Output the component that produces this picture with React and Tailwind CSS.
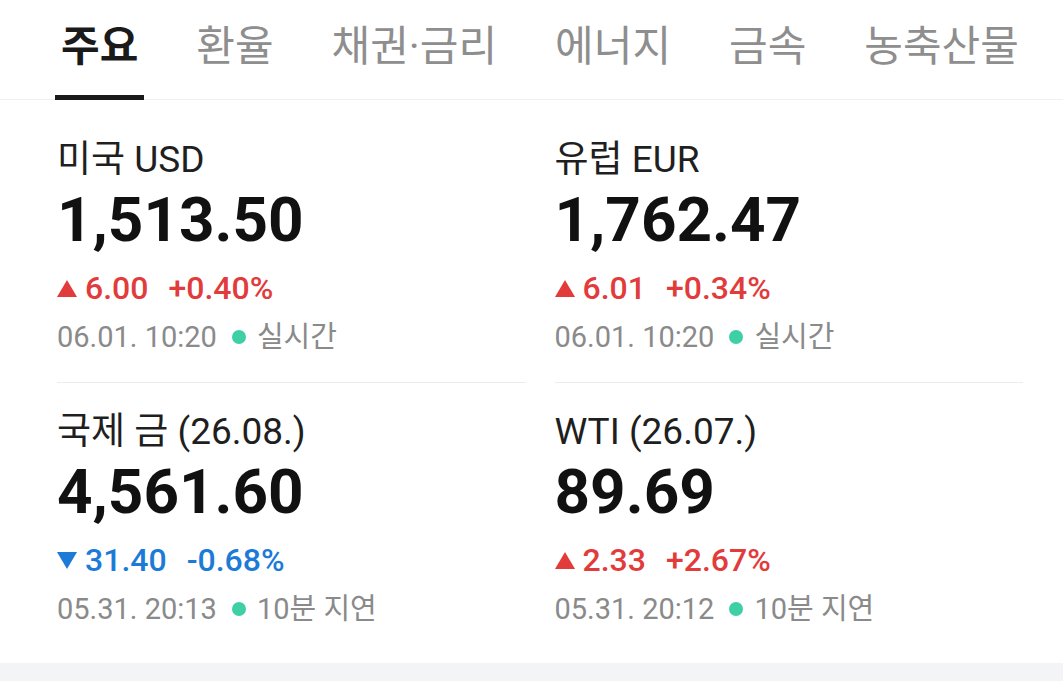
const TABS = ['주요', '환율', '채권·금리', '에너지', '금속', '농축산물'];

const ITEMS = [
  { name: '미국 USD', price: '1,513.50', dir: 'up', diff: '6.00', rate: '+0.40%', time: '06.01. 10:20', note: '실시간' },
  { name: '유럽 EUR', price: '1,762.47', dir: 'up', diff: '6.01', rate: '+0.34%', time: '06.01. 10:20', note: '실시간' },
  { name: '국제 금 (26.08.)', price: '4,561.60', dir: 'down', diff: '31.40', rate: '-0.68%', time: '05.31. 20:13', note: '10분 지연' },
  { name: 'WTI (26.07.)', price: '89.69', dir: 'up', diff: '2.33', rate: '+2.67%', time: '05.31. 20:12', note: '10분 지연' },
];

function Arrow({ dir }) {
  if (dir === 'up') {
    return (
      <svg width="20" height="17" viewBox="0 0 20 17" className="shrink-0">
        <polygon points="10,0 20,17 0,17" fill="#e23b3b" />
      </svg>
    );
  }
  return (
    <svg width="20" height="17" viewBox="0 0 20 17" className="shrink-0">
      <polygon points="0,0 20,0 10,17" fill="#1b7bd6" />
    </svg>
  );
}

function Quote({ item, first }) {
  const up = item.dir === 'up';
  return (
    <div className={first ? 'pt-[40px] pb-[27px] border-b border-[#ececec]' : 'pt-[29px] pb-[36px]'}>
      <div className="text-[37px] leading-[40px] text-[#1f1f1f]">{item.name}</div>
      <div className="mt-[5px] text-[62px] leading-[70px] font-bold text-[#111111]">{item.price}</div>
      <div className={`mt-[15px] flex items-center text-[32px] leading-[36px] font-medium ${up ? 'text-[#e23b3b]' : 'text-[#1b7bd6]'}`}>
        <Arrow dir={item.dir} />
        <span className="ml-[8px]">{item.diff}</span>
        <span className="ml-[20px]">{item.rate}</span>
      </div>
      <div className="mt-[13px] flex items-center text-[29px] leading-[36px] text-[#8a8a8a]">
        <span>{item.time}</span>
        <span className="ml-[15px] w-[14px] h-[14px] rounded-full bg-[#3fcfa4]" />
        <span className="ml-[11px]">{item.note}</span>
      </div>
    </div>
  );
}

export default function App() {
  return (
    <div
      className="flex flex-col h-[681px] bg-white overflow-hidden"
      style={{ fontFamily: 'Roboto, "Noto Sans CJK KR", sans-serif' }}
    >
      {/* Tabs */}
      <nav className="flex h-[100px] shrink-0 border-b border-[#f0f0f0] pl-[55px] gap-[46px]">
        {TABS.map((tab, i) => {
          const active = i === 0;
          return (
            <div key={tab} className="flex flex-col justify-between px-[6px] pt-[22px] whitespace-nowrap">
              <span className={`text-[42px] leading-[50px] ${active ? 'font-bold text-[#1a1a1a]' : 'text-[#8e8e8e]'}`}>
                {tab}
              </span>
              <span className={`h-[5px] -mb-px -mx-[6px] ${active ? 'bg-[#1a1a1a]' : 'bg-transparent'}`} />
            </div>
          );
        })}
      </nav>

      {/* Quotes */}
      <div className="grid grid-cols-2 gap-x-[29px] pl-[57px] pr-[40px]">
        {ITEMS.map((item, i) => (
          <Quote key={item.name} item={item} first={i < 2} />
        ))}
      </div>

      <div className="flex-1 bg-[#f3f4f6]" />
    </div>
  );
}
